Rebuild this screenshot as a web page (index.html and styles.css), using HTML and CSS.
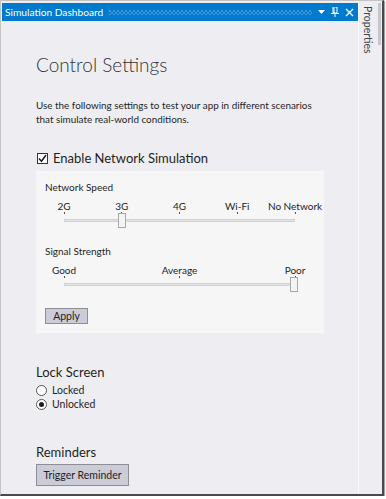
FILE: index.html
```html
<!DOCTYPE html>
<html lang="en">
<head>
  <meta charset="UTF-8">
  <title>Simulation Dashboard</title>
  <link rel="stylesheet" href="styles.css">
</head>
<body>
<div class="window">
  <div class="main">
    <div class="titlebar">
      <span class="title">Simulation Dashboard</span>
      <span class="grip"></span>
      <span class="tb-icons">
        <svg width="7" height="4" viewBox="0 0 7 4"><path d="M0 0h7L3.5 4z" fill="#fff"/></svg>
        <svg width="8" height="10" viewBox="0 0 8 10"><path d="M2 0h4v6H2z M3 1v5" fill="none" stroke="#fff" stroke-width="1"/><path d="M0 6.5h8 M4 6.5V10" stroke="#fff" stroke-width="1"/></svg>
        <svg width="9" height="9" viewBox="0 0 9 9"><path d="M1 1l7 7M8 1L1 8" stroke="#fff" stroke-width="1.4"/></svg>
      </span>
    </div>

    <div class="content">
      <h1>Control Settings</h1>
      <p class="intro">Use the following settings to test your app in different scenarios that simulate real-world conditions.</p>

      <label class="check">
        <span class="box">
          <svg width="9" height="9" viewBox="0 0 9 9"><path d="M1 4.5l2.5 2.8L8 1" fill="none" stroke="#1e1e1e" stroke-width="1.5"/></svg>
        </span>
        Enable Network Simulation
      </label>

      <div class="panel">
        <div class="field-label first">Network Speed</div>
        <div class="slider">
          <div class="stops">
            <div class="stop"><span>2G</span><i></i></div>
            <div class="stop"><span>3G</span><i></i></div>
            <div class="stop"><span>4G</span><i></i></div>
            <div class="stop"><span>Wi-Fi</span><i></i></div>
            <div class="stop"><span>No Network</span><i></i></div>
          </div>
          <div class="track"><div class="thumb" style="left: 25%;"></div></div>
        </div>

        <div class="field-label">Signal Strength</div>
        <div class="slider">
          <div class="stops">
            <div class="stop"><span>Good</span><i></i></div>
            <div class="stop"><span>Average</span><i></i></div>
            <div class="stop"><span>Poor</span><i></i></div>
          </div>
          <div class="track"><div class="thumb" style="left: 100%;"></div></div>
        </div>

        <button class="btn apply">Apply</button>
      </div>

      <h2 class="lock">Lock Screen</h2>
      <div class="radio"><span class="dot"></span>Locked</div>
      <div class="radio"><span class="dot on"></span>Unlocked</div>

      <h2 class="reminders">Reminders</h2>
      <button class="btn trigger">Trigger Reminder</button>
    </div>
  </div>

  <div class="side">
    <span class="side-tab">Properties</span>
    <span class="side-bar"></span>
  </div>
</div>
</body>
</html>
```

FILE: styles.css
```css
* {
  box-sizing: border-box;
}

body {
  margin: 0;
  background-color: #fff;
  font-family: Lato, "Noto Sans", sans-serif;
  color: #1e1e1e;
}

.window {
  width: 384px;
  height: 496px;
  display: flex;
  padding: 2px 0 0 1px;
  background-color: #eeeef2;
  border: 1px solid #c4c4c4;
  border-right: 2px solid #4a4a4a;
  border-bottom: 2px solid #4a4a4a;
  box-shadow: 1px 1px 1px rgba(0,0,0,0.35);
}

.main {
  width: 356px;
  display: flex;
  flex-direction: column;
}

.titlebar {
  height: 18px;
  display: flex;
  align-items: center;
  padding: 0 4px 0 3px;
  background-color: #007acc;
  color: white;
  font-size: 10.2px;
}

.grip {
  flex: 1;
  height: 5px;
  margin: 0 6px 0 6px;
  background-image:
    radial-gradient(circle at 1px 1px, #3f97d8 0.8px, transparent 1px),
    radial-gradient(circle at 1px 1px, #3f97d8 0.8px, transparent 1px);
  background-size: 4px 4px;
  background-position: 0 0, 2px 2px;
}

.tb-icons {
  display: flex;
  align-items: center;
  gap: 6px;
}

.content {
  padding-left: 34px;
}

h1 {
  margin: 31px 0 0 0;
  font-weight: 300;
  font-size: 19px;
  line-height: 26px;
  color: #333;
}

.intro {
  margin: 20px 0 0 0;
  font-size: 9.9px;
  line-height: 14px;
  width: 290px;
}

.check {
  display: flex;
  align-items: center;
  height: 16px;
  margin-top: 24px;
  font-size: 13px;
}

.box {
  width: 11px;
  height: 11px;
  margin: 0 5px 0 1px;
  border: 1px solid #333;
  background-color: white;
  display: flex;
  align-items: center;
  justify-content: center;
}

.panel {
  width: 288px;
  margin-top: 5px;
  padding: 9px 0 9px 9px;
  background-color: #f6f6f6;
}

.field-label {
  font-size: 10px;
  line-height: 14px;
}

.slider {
  width: 231px;
  margin: 6px 0 22px 19px;
}

.stops {
  display: flex;
  justify-content: space-between;
  height: 14px;
}

.stop {
  width: 0;
  display: flex;
  flex-direction: column;
  align-items: center;
}

.stop span {
  white-space: nowrap;
  font-size: 10px;
  line-height: 12px;
}

.stop i {
  width: 1px;
  height: 2px;
  background-color: #555;
}

.track {
  position: relative;
  height: 3px;
  margin-top: 5px;
  background-color: #e4e4e4;
  border: 1px solid #d2d2d2;
}

.thumb {
  position: absolute;
  top: -7px;
  width: 8px;
  height: 15px;
  margin-left: -4px;
  background-color: #f3f3f3;
  border: 1px solid #a8a8a8;
}

.btn {
  display: block;
  font-family: inherit;
  color: #1e1e1e;
  background-color: #ccccd9;
  border: 1px solid #8e8e96;
  padding: 0;
  cursor: pointer;
}

.apply {
  width: 43px;
  height: 16px;
  font-size: 10.5px;
}

h2 {
  margin: 0;
  font-weight: normal;
  font-size: 13px;
  line-height: 18px;
}

.lock {
  margin-top: 30px;
}

.radio {
  display: flex;
  align-items: center;
  height: 14px;
  font-size: 10.5px;
}

.lock + .radio {
  margin-top: 2px;
}

.dot {
  width: 11px;
  height: 11px;
  margin-right: 5px;
  border: 1px solid #555;
  border-radius: 50%;
  background-color: white;
  display: flex;
  align-items: center;
  justify-content: center;
}

.dot.on::after {
  content: "";
  width: 5px;
  height: 5px;
  border-radius: 50%;
  background-color: #1e1e1e;
}

.reminders {
  margin-top: 32px;
}

.trigger {
  width: 93px;
  height: 22px;
  margin-top: 3px;
  font-size: 10.5px;
}

.side {
  width: 24px;
  display: flex;
  border-left: 1px solid #f8f8fa;
}

.side-tab {
  writing-mode: vertical-rl;
  padding: 3px 0 0 3px;
  font-size: 10.5px;
  color: #444;
}

.side-bar {
  width: 3px;
  height: 42px;
  margin: 0 1px 0 auto;
  background-color: #c6c6ce;
}
```
